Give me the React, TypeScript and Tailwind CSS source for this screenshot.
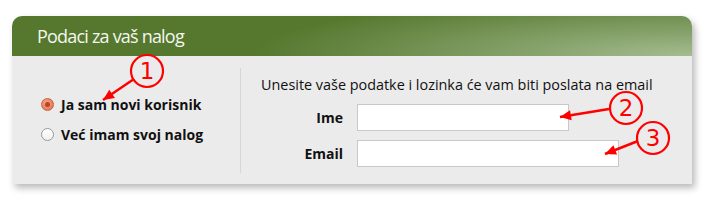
import React from "react";

type Arrow = { x1: number; y1: number; x2: number; y2: number };

const callouts = [
  { n: "1", cx: 147, cy: 71, arrow: { x1: 134, y1: 79, x2: 103, y2: 100 } },
  { n: "2", cx: 626, cy: 108, arrow: { x1: 609, y1: 109, x2: 560, y2: 117 } },
  { n: "3", cx: 653, cy: 138, arrow: { x1: 638, y1: 141, x2: 605, y2: 154 } },
];

function head({ x1, y1, x2, y2 }: Arrow) {
  const a = Math.atan2(y2 - y1, x2 - x1);
  const len = 11;
  const w = 5;
  const bx = x2 - len * Math.cos(a);
  const by = y2 - len * Math.sin(a);
  const px = -Math.sin(a) * w;
  const py = Math.cos(a) * w;
  return `${x2},${y2} ${bx + px},${by + py} ${bx - px},${by - py}`;
}

function Radio({ checked }: { checked?: boolean }) {
  if (checked) {
    return (
      <span className="flex h-[13px] w-[13px] items-center justify-center rounded-full border border-[#c9613f] bg-[radial-gradient(circle_at_40%_35%,#f6a283,#e0704c)]">
        <span className="h-[5px] w-[5px] rounded-full bg-[#b8452a]" />
      </span>
    );
  }
  return (
    <span className="h-[13px] w-[13px] rounded-full border border-[#9a9a9a] bg-[linear-gradient(#ffffff,#f0f0f0)]" />
  );
}

export default function App() {
  return (
    <div className="relative h-[205px] w-[706px] overflow-hidden bg-white font-['Open_Sans',sans-serif]">
      <div className="ml-[12px] mt-[16px] w-[680px] rounded-t-[10px] shadow-[3px_4px_7px_rgba(0,0,0,0.28)]">
        <div className="flex h-[40px] items-center rounded-t-[10px] bg-[radial-gradient(440px_62px_at_100%_100%,#a4bc90_0%,#55782e_100%)] pl-[25px]">
          <h2 className="text-[18px] tracking-[-0.8px] text-[#f3f7ee]">
            Podaci za vaš nalog
          </h2>
        </div>
        <div className="flex h-[128px] bg-[#ebebeb] pt-[12px]">
          <div className="flex h-[105px] w-[229px] flex-col gap-[10px] border-r border-[#d6d6d6] pl-[29px] pt-[26px]">
            <label className="flex h-[20px] items-center gap-[7px] text-[14px] font-bold text-[#111]">
              <Radio checked />
              Ja sam novi korisnik
            </label>
            <label className="flex h-[20px] items-center gap-[7px] text-[14px] font-bold text-[#111]">
              <Radio />
              Već imam svoj nalog
            </label>
          </div>
          <div className="flex flex-col pl-[20px] pt-[7px]">
            <p className="h-[20px] text-[14.4px] leading-[20px] text-[#111]">
              Unesite vaše podatke i lozinka će vam biti poslata na email
            </p>
            <div className="mt-[9px] flex items-center gap-[14px]">
              <span className="w-[82px] text-right text-[14px] font-bold text-[#111]">
                Ime
              </span>
              <input className="h-[27px] w-[212px] border border-[#c8c8c8] bg-white outline-none" />
            </div>
            <div className="mt-[9px] flex items-center gap-[14px]">
              <span className="w-[82px] text-right text-[14px] font-bold text-[#111]">
                Email
              </span>
              <input className="h-[27px] w-[262px] border border-[#c8c8c8] bg-white outline-none" />
            </div>
          </div>
        </div>
      </div>

      <svg
        className="pointer-events-none absolute left-0 top-0"
        width="706"
        height="205"
        viewBox="0 0 706 205"
      >
        {callouts.map((c) => (
          <g key={c.n}>
            <circle cx={c.cx} cy={c.cy} r="16" fill="none" stroke="#ff0000" strokeWidth="2.2" />
            <text
              x={c.cx}
              y={c.cy + 8}
              textAnchor="middle"
              fontSize="23"
              fill="#ff0000"
              fontFamily="'DejaVu Sans', sans-serif"
            >
              {c.n}
            </text>
            <line
              x1={c.arrow.x1}
              y1={c.arrow.y1}
              x2={c.arrow.x2}
              y2={c.arrow.y2}
              stroke="#ff0000"
              strokeWidth="2.5"
            />
            <polygon points={head(c.arrow)} fill="#ff0000" />
          </g>
        ))}
      </svg>
    </div>
  );
}
